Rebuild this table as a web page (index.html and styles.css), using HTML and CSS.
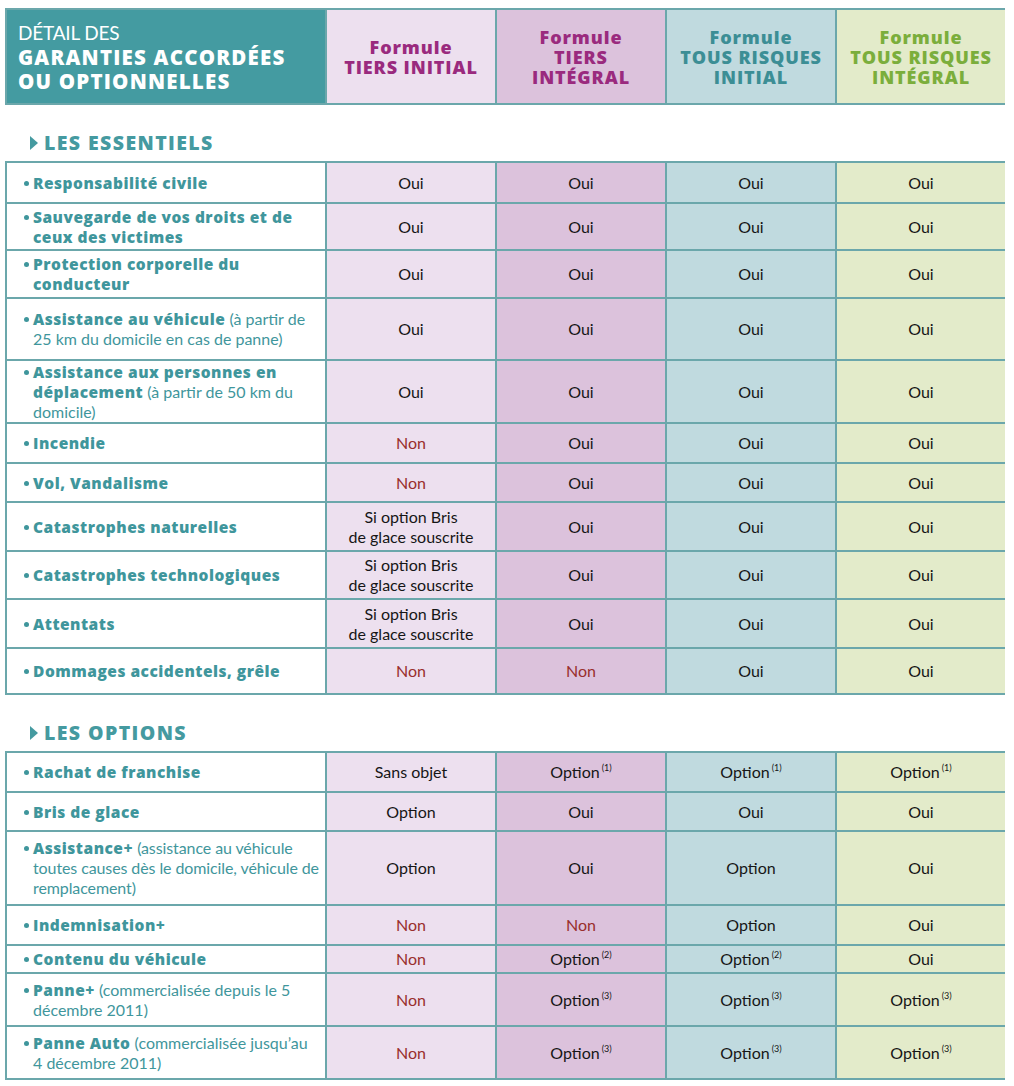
FILE: index.html
```html
<!DOCTYPE html>
<html lang="fr">
<head>
<meta charset="utf-8">
<title>Détail des garanties</title>
<link rel="stylesheet" href="styles.css">
</head>
<body>
<table class="grid head">
  <colgroup><col class="c-label"><col class="c-f"><col class="c-f"><col class="c-f"><col class="c-f"></colgroup>
  <tr>
    <th class="title"><span class="light">DÉTAIL DES</span><br>GARANTIES ACCORDÉES<br>OU OPTIONNELLES</th>
    <th class="f1 purple">Formule<br>TIERS INITIAL</th>
    <th class="f2 purple">Formule<br>TIERS<br>INTÉGRAL</th>
    <th class="f3 teal">Formule<br>TOUS RISQUES<br>INITIAL</th>
    <th class="f4 green">Formule<br>TOUS RISQUES<br>INTÉGRAL</th>
  </tr>
</table>

<h2 class="section"><span class="tri"></span>LES ESSENTIELS</h2>
<table class="grid">
  <colgroup><col class="c-label"><col class="c-f"><col class="c-f"><col class="c-f"><col class="c-f"></colgroup>
  <tr class="h41"><td class="lbl"><b>Responsabilité civile</b></td><td class="f1">Oui</td><td class="f2">Oui</td><td class="f3">Oui</td><td class="f4">Oui</td></tr>
  <tr class="h47"><td class="lbl"><b>Sauvegarde de vos droits et de ceux des victimes</b></td><td class="f1">Oui</td><td class="f2">Oui</td><td class="f3">Oui</td><td class="f4">Oui</td></tr>
  <tr class="h48"><td class="lbl"><b>Protection corporelle du conducteur</b></td><td class="f1">Oui</td><td class="f2">Oui</td><td class="f3">Oui</td><td class="f4">Oui</td></tr>
  <tr class="h62"><td class="lbl"><b>Assistance au véhicule</b> <span>(à partir de 25&nbsp;km du domicile en cas de panne)</span></td><td class="f1">Oui</td><td class="f2">Oui</td><td class="f3">Oui</td><td class="f4">Oui</td></tr>
  <tr class="h63"><td class="lbl"><b>Assistance aux personnes en déplacement</b> <span>(à partir de 50&nbsp;km du domicile)</span></td><td class="f1">Oui</td><td class="f2">Oui</td><td class="f3">Oui</td><td class="f4">Oui</td></tr>
  <tr class="h40"><td class="lbl"><b>Incendie</b></td><td class="f1 non">Non</td><td class="f2">Oui</td><td class="f3">Oui</td><td class="f4">Oui</td></tr>
  <tr class="h39"><td class="lbl"><b>Vol, Vandalisme</b></td><td class="f1 non">Non</td><td class="f2">Oui</td><td class="f3">Oui</td><td class="f4">Oui</td></tr>
  <tr class="h49"><td class="lbl"><b>Catastrophes naturelles</b></td><td class="f1">Si option Bris<br>de glace souscrite</td><td class="f2">Oui</td><td class="f3">Oui</td><td class="f4">Oui</td></tr>
  <tr class="h48"><td class="lbl"><b>Catastrophes technologiques</b></td><td class="f1">Si option Bris<br>de glace souscrite</td><td class="f2">Oui</td><td class="f3">Oui</td><td class="f4">Oui</td></tr>
  <tr class="h49"><td class="lbl"><b>Attentats</b></td><td class="f1">Si option Bris<br>de glace souscrite</td><td class="f2">Oui</td><td class="f3">Oui</td><td class="f4">Oui</td></tr>
  <tr class="h46"><td class="lbl"><b>Dommages accidentels, grêle</b></td><td class="f1 non">Non</td><td class="f2 non">Non</td><td class="f3">Oui</td><td class="f4">Oui</td></tr>
</table>

<h2 class="section"><span class="tri"></span>LES OPTIONS</h2>
<table class="grid">
  <colgroup><col class="c-label"><col class="c-f"><col class="c-f"><col class="c-f"><col class="c-f"></colgroup>
  <tr class="h40"><td class="lbl"><b>Rachat de franchise</b></td><td class="f1">Sans objet</td><td class="f2">Option<sup>(1)</sup></td><td class="f3">Option<sup>(1)</sup></td><td class="f4">Option<sup>(1)</sup></td></tr>
  <tr class="h39"><td class="lbl"><b>Bris de glace</b></td><td class="f1">Option</td><td class="f2">Oui</td><td class="f3">Oui</td><td class="f4">Oui</td></tr>
  <tr class="h74"><td class="lbl"><b>Assistance+</b> <span class="narrow">(assistance au véhicule toutes causes dès le domicile, véhicule de remplacement)</span></td><td class="f1">Option</td><td class="f2">Oui</td><td class="f3">Option</td><td class="f4">Oui</td></tr>
  <tr class="h40"><td class="lbl"><b>Indemnisation+</b></td><td class="f1 non">Non</td><td class="f2 non">Non</td><td class="f3">Option</td><td class="f4">Oui</td></tr>
  <tr class="h28"><td class="lbl"><b>Contenu du véhicule</b></td><td class="f1 non">Non</td><td class="f2">Option<sup>(2)</sup></td><td class="f3">Option<sup>(2)</sup></td><td class="f4">Oui</td></tr>
  <tr class="h53"><td class="lbl"><b>Panne+</b> <span>(commercialisée depuis le 5 décembre 2011)</span></td><td class="f1 non">Non</td><td class="f2">Option<sup>(3)</sup></td><td class="f3">Option<sup>(3)</sup></td><td class="f4">Option<sup>(3)</sup></td></tr>
  <tr class="h53"><td class="lbl"><b>Panne Auto</b> <span>(commercialisée jusqu’au 4&nbsp;décembre 2011)</span></td><td class="f1 non">Non</td><td class="f2">Option<sup>(3)</sup></td><td class="f3">Option<sup>(3)</sup></td><td class="f4">Option<sup>(3)</sup></td></tr>
</table>
</body>
</html>
```

FILE: styles.css
```css
html, body {
  background: #ffffff;
}
body {
  margin: 8px 9px 0 5px;
  font-family: Lato, "Open Sans", "Liberation Sans", sans-serif;
  color: #161616;
}
.grid {
  width: 1000px;
  border-collapse: collapse;
  table-layout: fixed;
}
.c-label { width: 320px; }
.c-f { width: 170px; }
.grid td, .grid th {
  border: 2px solid #6ba7ab;
  padding: 0 6px;
  text-align: center;
  vertical-align: middle;
  font-size: 16px;
  line-height: 20px;
}
.head th {
  height: 93px;
  font-family: "Open Sans", Lato, sans-serif;
  font-weight: 800;
  font-size: 18px;
  line-height: 20px;
  letter-spacing: 0.9px;
  padding: 0 2px;
}
.head .title {
  background: #449ba1;
  color: #ffffff;
  text-align: left;
  padding: 0 8px 0 11px;
  font-size: 20.5px;
  line-height: 24px;
  letter-spacing: 1.2px;
}
.light {
  font-family: Lato, sans-serif;
  font-weight: 400;
  font-size: 19px;
  letter-spacing: -0.2px;
}
.purple { color: #9a2a7e; }
.teal { color: #3c8e95; }
.green { color: #7bae3c; }
.f1 { background: #ede0ef; }
.f2 { background: #dcc2dc; }
.f3 { background: #c0dadf; }
.f4 { background: #e3ebca; }
.non { color: #992f2c; }
.section {
  margin: 27px 0 7px 25px;
  display: flex;
  align-items: center;
  gap: 6px;
  font-family: "Open Sans", Lato, sans-serif;
  font-size: 19.5px;
  line-height: 22px;
  font-weight: 800;
  letter-spacing: 1.4px;
  color: #459aa0;
}
.tri {
  width: 0;
  height: 0;
  border-top: 7px solid transparent;
  border-bottom: 7px solid transparent;
  border-left: 8px solid #459aa0;
}
.grid td.lbl {
  text-align: left;
  color: #3f969c;
  padding: 0 1px 0 26px;
  font-size: 16px;
  line-height: 20px;
}
.grid td.lbl::before {
  content: "";
  display: inline-block;
  width: 5px;
  height: 5px;
  border-radius: 50%;
  background: #3f969c;
  margin-left: -9px;
  margin-right: 4px;
  vertical-align: 3px;
}
.lbl b {
  font-family: "Open Sans", Lato, sans-serif;
  font-weight: 800;
  font-size: 15.5px;
  letter-spacing: 0.5px;
}
.narrow {
  letter-spacing: -0.1px;
}
sup {
  font-size: 9px;
  line-height: 0;
  vertical-align: 7px;
  margin-left: 2px;
}
.h28 { height: 28px; }
.h39 { height: 39px; }
.h40 { height: 40px; }
.h41 { height: 41px; }
.h46 { height: 46px; }
.h47 { height: 47px; }
.h48 { height: 48px; }
.h49 { height: 49px; }
.h53 { height: 53px; }
.h62 { height: 62px; }
.h63 { height: 63px; }
.h74 { height: 74px; }
```
